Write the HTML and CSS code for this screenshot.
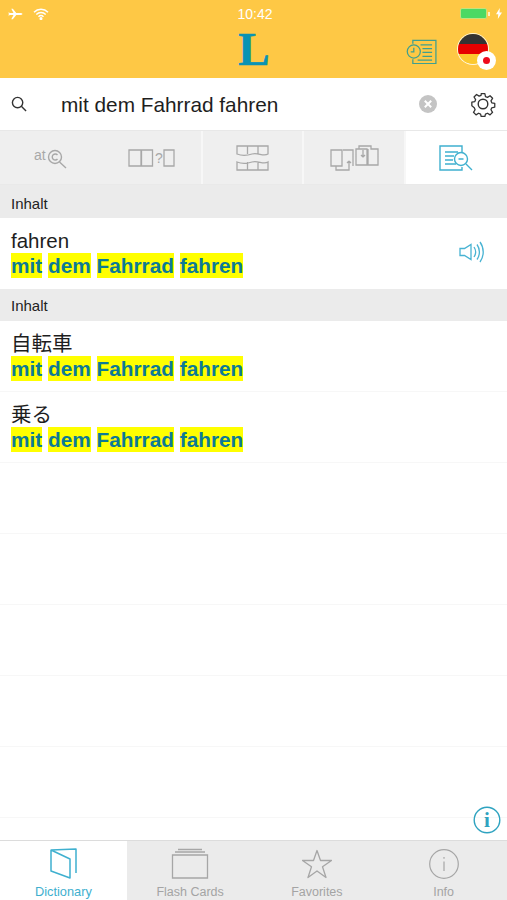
FILE: index.html
```html
<!DOCTYPE html>
<html lang="de">
<head>
<meta charset="utf-8">
<title>Dictionary</title>
<link rel="stylesheet" href="styles.css">
</head>
<body>
<div class="app">
  <header class="top">
    <div class="status">
      <div class="status-left">
        <svg class="plane" width="16" height="12" viewBox="0 0 17 14"><path d="M1 5.800h4.600L3 .8h1.800l4 5h4.400c1.400 0 2.800.5 2.800 1.200s-1.400 1.200-2.800 1.200H8.800l-4 5H3l2.600-5H1L0 9.500V4.500z" fill="#fff"/></svg>
        <svg class="wifi" width="16" height="12" viewBox="0 0 16 12" fill="none" stroke="#fff" stroke-width="1.500"><path d="M1 4.200a10 10 0 0 1 14 0M3.300 6.500a6.800 6.800 0 0 1 9.400 0M5.500 8.700a3.600 3.600 0 0 1 5 0"/><circle cx="8" cy="10.600" r=".8" fill="#fff"/></svg>
      </div>
      <div class="time">10:42</div>
      <div class="status-right">
        <span class="battery"><span class="battery-fill"></span></span>
        <span class="battery-nub"></span>
        <svg width="6" height="11" viewBox="0 0 6 11"><path d="M3.800 0 0 6.300h2.300L1.800 11 6 4.500H3.500z" fill="#fff"/></svg>
      </div>
    </div>
    <div class="nav">
      <div class="logo">L</div>
      <svg class="history" width="31" height="25" viewBox="0 0 32 26" fill="none" stroke="#3f9f8f" stroke-width="1.300">
        <path d="M7 5V1.500h24v24H7V21"/>
        <circle cx="8" cy="13" r="6.800"/>
        <path d="M8 9v4.300H4.800"/>
        <path d="M15 6h12M17 10h10M17 14h10M17 18h10M12 22h15"/>
      </svg>
      <div class="flag-wrap">
        <div class="flag"><span class="black"></span><span class="red"></span><span class="gold"></span></div>
        <div class="badge"><span></span></div>
      </div>
    </div>
  </header>

  <div class="search">
    <svg class="search-icon" width="16" height="16" viewBox="0 0 17 17" fill="none" stroke="#333" stroke-width="1.500"><circle cx="7" cy="7" r="5.500"/><path d="m11 11 5 5"/></svg>
    <div class="query">mit dem Fahrrad fahren</div>
    <svg class="clear" width="18" height="18" viewBox="0 0 18 18"><circle cx="9" cy="9" r="9" fill="#c4c4c4"/><path d="m5.800 5.800 6.400 6.400m0-6.400-6.400 6.400" stroke="#fff" stroke-width="2"/></svg>
    <svg class="gear" width="26" height="26" viewBox="0 0 26 26" fill="none" stroke="#333" stroke-width="1.400" stroke-linejoin="round"><path d="M11 1.500h4l.7 3.300 2.200.9 2.800-1.800 2.800 2.800-1.800 2.800.9 2.200 3.300.7v4l-3.300.7-.9 2.200 1.800 2.800-2.800 2.800-2.800-1.800-2.200.9-.7 2.700h-4l-.7-2.700-2.200-.9-2.800 1.800-2.800-2.800 1.800-2.800-.9-2.200L.7 15v-4l3.300-.7.900-2.200-1.800-2.800 2.800-2.800 2.800 1.800 2.200-.9z" transform="translate(1.200 1.200) scale(.91)"/><circle cx="13" cy="13" r="4.800"/></svg>
  </div>

  <nav class="modes">
    <div class="mode mode-plain">
      <svg class="icon-at" width="34" height="22" viewBox="0 0 34 22" fill="none" stroke="#a8a8a8" stroke-width="1.400"><text x="0" y="13" class="at">at</text><circle cx="21" cy="10" r="6.500"/><path d="M23.500 8a3 3 0 1 0 0 4M25.500 15l6.500 6"/></svg>
    </div>
    <div class="mode">
      <svg width="47" height="18" viewBox="0 0 47 18" fill="none" stroke="#a8a8a8" stroke-width="1.300"><path d="M1 1h12v16H1zM13.500 1h11v16h-11zM36 1h10v16H36z"/><text x="27" y="14" class="q">?</text></svg>
    </div>
    <div class="mode">
      <svg width="33" height="26" viewBox="0 0 33 26" fill="none" stroke="#a8a8a8" stroke-width="1.300"><path d="M1 1h31v8c-5 3-10-2-16 0s-10 2-15 0zM11.500 1v8M22 1v9M1 25h31v-8c-5 3-10-2-16 0s-10 2-15 0zM11.500 25v-8M22 25v-8"/></svg>
    </div>
    <div class="mode">
      <svg class="icon-swap" width="49" height="26" viewBox="0 0 49 26" fill="none" stroke="#a8a8a8" stroke-width="1.300"><path d="M1 5h11v16H1zM13 5h10v16M6 21v4h13v-9M19 16l-2 2m2-2 2 2M26 4h11v16H26zM29 4V1h12v3h7v16H38V4M33 5v7m0 0-2-2m2 2 2-2"/></svg>
    </div>
    <div class="mode mode-active">
      <svg class="icon-look" width="34" height="26" viewBox="0 0 34 26" fill="none" stroke="#3fb0cf" stroke-width="1.400"><path d="M23 7V1H1v24h22v-3"/><path d="M6 7h13M6 11h9M6 15h8M6 19h11"/><circle cx="22" cy="14" r="6.500"/><path d="M19.500 14h5M27 19l6 6"/></svg>
    </div>
  </nav>

  <main class="results">
    <div class="section section-first">Inhalt</div>
    <div class="row row-first">
      <div class="row-text">
        <div class="word">fahren</div>
        <div class="hits"><mark>mit</mark> <mark>dem</mark> <mark>Fahrrad</mark> <mark>fahren</mark></div>
      </div>
      <svg class="speaker" width="25" height="24" viewBox="0 0 25 24" fill="none" stroke="#48b3d3" stroke-width="1.300"><path d="M1 8.500h4.500L12 4.500v15l-6.500-4H1z"/><path d="M15 7c2 3 2 7 0 10M18 4.500c3.200 4.500 3.200 10.500 0 15M21 2c4.300 6 4.300 14 0 20"/></svg>
    </div>
    <div class="section">Inhalt</div>
    <div class="row">
      <div class="row-text">
        <div class="word">自転車</div>
        <div class="hits"><mark>mit</mark> <mark>dem</mark> <mark>Fahrrad</mark> <mark>fahren</mark></div>
      </div>
    </div>
    <div class="row">
      <div class="row-text">
        <div class="word">乗る</div>
        <div class="hits"><mark>mit</mark> <mark>dem</mark> <mark>Fahrrad</mark> <mark>fahren</mark></div>
      </div>
    </div>
    <div class="row"></div>
    <div class="row"></div>
    <div class="row"></div>
    <div class="row"></div>
    <div class="row"></div>
    <div class="row row-short"></div>
    <svg class="info-float" width="28" height="28" viewBox="0 0 28 28" fill="none"><circle cx="14" cy="14" r="12.800" stroke="#2fa3c0" stroke-width="1.400"/><text x="14" y="21" class="i">i</text></svg>
  </main>

  <footer class="tabbar">
    <div class="tab tab-active">
      <svg width="28" height="31" viewBox="0 0 28 31" fill="none" stroke="#3fb0cf" stroke-width="1.500" stroke-linejoin="round"><path d="M2 2 21 11v19L2 23zM2 2 27 1v24"/></svg>
      <span>Dictionary</span>
    </div>
    <div class="tab">
      <svg width="38" height="31" viewBox="0 0 38 31" fill="none" stroke="#a6a6a6" stroke-width="1.300"><path d="M1.500 7h35v23h-35zM4 4h30M7 1.500h24"/></svg>
      <span>Flash Cards</span>
    </div>
    <div class="tab">
      <svg width="30" height="31" viewBox="0 0 30 31" fill="none" stroke="#a6a6a6" stroke-width="1.300" stroke-linejoin="round"><path d="m15 2.500 3.500 10H29.500l-9 6.300 3.500 10.700-9-6.600L6 29.500l3.500-10.700-9-6.300H11.500z"/></svg>
      <span>Favorites</span>
    </div>
    <div class="tab">
      <svg width="30" height="31" viewBox="0 0 30 31" fill="none" stroke="#a6a6a6" stroke-width="1.200"><circle cx="15" cy="16" r="14.300"/><path d="M15 13.500V23M15 9v1.800"/></svg>
      <span>Info</span>
    </div>
  </footer>
</div>
</body>
</html>
```
FILE: styles.css
```css
* { box-sizing: border-box; }
html, body { margin: 0; padding: 0; }
body { background: #fff; font-family: "Liberation Sans", "Noto Sans CJK JP", sans-serif; color: #1c1c1c; }
.app { width: 507px; height: 900px; display: flex; flex-direction: column; overflow: hidden; }

.top { height: 78px; background: #fec845; flex: none; }
.status { height: 27px; display: flex; align-items: center; justify-content: space-between; position: relative; padding: 0 5px 0 8px; }
.status-left { display: flex; align-items: center; gap: 9px; }
.time { position: absolute; left: 3px; right: 0; top: 6px; text-align: center; color: #fff; font-size: 14px; line-height: 16px; }
.status-right { display: flex; align-items: center; }
.battery { width: 27px; height: 11px; border-radius: 2px; display: block; }
.battery-fill { display: block; width: 100%; height: 100%; background: #4cd964; border: 1px solid #c5e27c; border-radius: 2px; }
.battery-nub { width: 2px; height: 4px; background: #fff3c0; margin: 0 6px 0 1px; display: block; }

.nav { height: 51px; position: relative; }
.logo { position: absolute; left: 232px; top: 0; width: 44px; text-align: center; font-family: "Liberation Serif", serif; font-weight: 700; font-size: 47px; line-height: 45px; color: #0a93b3; -webkit-text-stroke: 0.6px #0a93b3; }
.history { position: absolute; left: 406px; top: 12px; }
.flag-wrap { position: absolute; left: 458px; top: 7px; width: 38px; height: 38px; }
.flag { width: 30px; height: 30px; border-radius: 50%; overflow: hidden; display: flex; flex-direction: column; box-shadow: 0 0 0 1px #fff6d8; }
.flag span { flex: 1; display: block; }
.black { background: #333; }
.red { background: #e60000; }
.gold { background: #fcc92f; }
.badge { position: absolute; left: 19px; top: 17px; width: 19px; height: 19px; border-radius: 50%; background: #fff; display: flex; align-items: center; justify-content: center; }
.badge span { width: 7px; height: 7px; border-radius: 50%; background: #ee0a1c; display: block; }

.search { height: 52px; flex: none; display: flex; align-items: center; background: #fff; }
.search-icon { margin-left: 11px; flex: none; }
.query { margin-left: 34px; padding-top: 2px; font-size: 20.8px; line-height: 24px; color: #1e1e1e; flex: 1; }
.clear { margin-right: 33px; flex: none; }
.gear { margin-right: 11px; flex: none; }

.modes { height: 55px; flex: none; display: flex; background: #efefef; border-top: 1px solid #e8e8e8; border-bottom: 1px solid #e9e9e9; }
.mode { flex: 0 0 20%; display: flex; align-items: center; justify-content: center; border-right: 2px solid #f7f7f7; }
.mode-plain { border-right: 0; }
.mode-active { background: #fff; border-right: 0; }
.icon-at { margin-left: 1px; }
.icon-swap { margin-left: 1px; }
.icon-look { margin-right: 1px; }
.at { font-family: "Liberation Sans", sans-serif; font-size: 14px; fill: #a8a8a8; stroke: none; }
.q { font-family: "Liberation Sans", sans-serif; font-size: 14px; fill: #a8a8a8; stroke: none; }

.results { flex: 1; position: relative; display: flex; flex-direction: column; min-height: 0; }
.section { height: 32px; background: #ebebeb; font-size: 15px; line-height: 32px; padding: 1px 0 0 11px; color: #222; flex: none; }
.section-first { height: 33px; padding-top: 3px; }
.row { height: 71px; flex: none; display: flex; align-items: flex-start; justify-content: space-between; padding: 11px 0 0 11px; border-bottom: 1px solid #f7f7f7; }
.row-first { border-bottom: 0; }
.row-short { height: 23px; border-bottom: 0; }
.word { font-size: 20.5px; line-height: 24px; color: #1e1e1e; }
.hits { font-size: 20.8px; font-weight: 700; line-height: 25px; color: #0c7a96; white-space: pre-wrap; }
mark { background: #ffff00; color: inherit; display: inline-block; height: 25px; }
.speaker { margin: 11px 23px 0 0; }
.info-float { position: absolute; left: 473px; top: 621px; }
.i { font-family: "Liberation Serif", serif; font-size: 21px; font-weight: 700; fill: #2fa3c0; text-anchor: middle; }

.tabbar { height: 60px; flex: none; display: flex; background: #ebebeb; border-top: 1px solid #dcdcdc; }
.tab { flex: 1; display: flex; flex-direction: column; align-items: center; padding-top: 7px; color: #a4a4a4; font-size: 12.5px; line-height: 14px; }
.tab svg { display: block; flex: none; }
.tab span { margin-top: 6px; }
.tab-active { background: #fff; color: #3fb0cf; font-size: 12.8px; }
```
